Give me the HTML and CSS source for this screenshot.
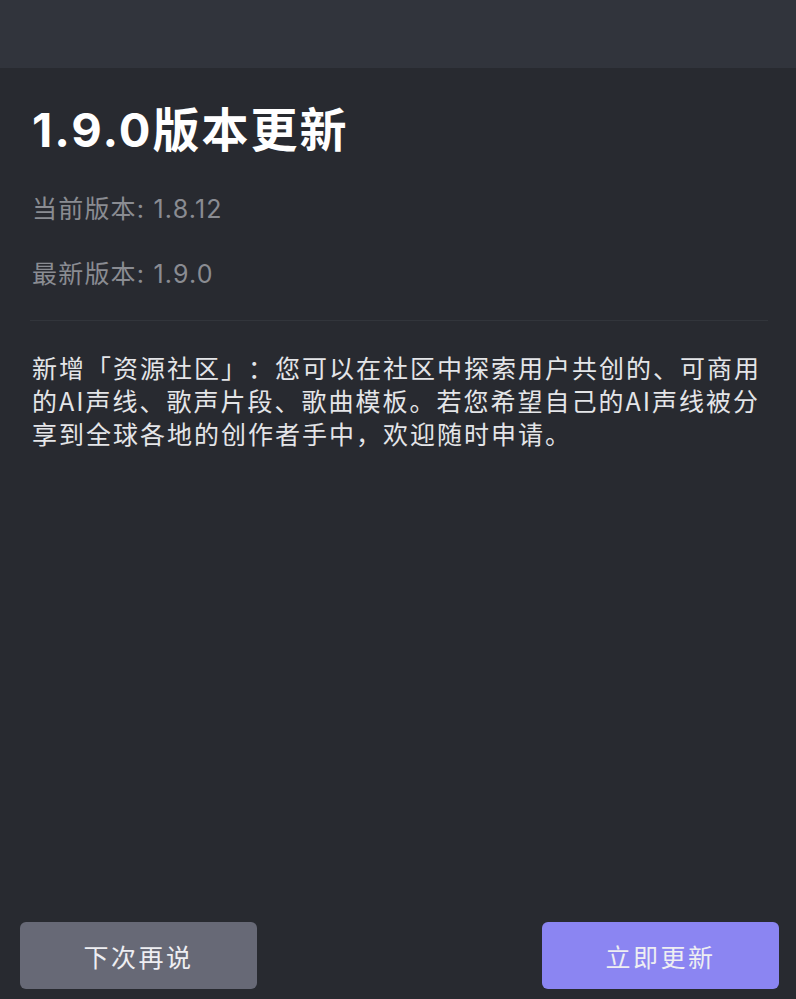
FILE: index.html
```html
<!DOCTYPE html>
<html lang="zh-CN">
<head>
<meta charset="utf-8">
<title>1.9.0版本更新</title>
<link rel="stylesheet" href="styles.css">
</head>
<body>
<div class="dialog">
  <div class="topbar"></div>
  <div class="content">
    <h1 class="title">1.9.0版本更新</h1>
    <p class="meta">当前版本: 1.8.12</p>
    <p class="meta meta-second">最新版本: 1.9.0</p>
    <div class="divider"></div>
    <p class="notes"><span class="line">新增「资源社区」：您可以在社区中探索用户共创的、可商用</span><span class="line">的AI声线、歌声片段、歌曲模板。若您希望自己的AI声线被分</span><span class="line">享到全球各地的创作者手中，欢迎随时申请。</span></p>
  </div>
  <div class="footer">
    <button class="btn btn-later">下次再说</button>
    <button class="btn btn-update">立即更新</button>
  </div>
</div>
</body>
</html>
```

FILE: styles.css
```css
html, body {
  margin: 0;
  padding: 0;
  background: #282a30;
}

body {
  font-family: Inter, "Noto Sans CJK SC", sans-serif;
  width: 796px;
  height: 999px;
  overflow: hidden;
}

.dialog {
  display: flex;
  flex-direction: column;
  height: 999px;
  background: #282a30;
}

.topbar {
  height: 68px;
  background: #31343c;
  flex: none;
}

.content {
  padding: 0 28px 0 32px;
  flex: 1;
}

.title {
  margin: 33px 0 0;
  font-size: 47px;
  line-height: 57px;
  font-weight: 700;
  color: #ffffff;
  letter-spacing: 2px;
}

.meta {
  margin: 36px 0 0;
  font-size: 25px;
  line-height: 30px;
  color: #8a8c92;
  letter-spacing: 1.2px;
}

.meta-second {
  margin-top: 35px;
}

.divider {
  margin: 31px 0 0 -2px;
  height: 1px;
  background: #32353b;
}

.notes {
  margin: 30px 0 0;
  font-family: "Noto Sans CJK SC", sans-serif;
  font-size: 25px;
  line-height: 33px;
  color: #e4e5e8;
  letter-spacing: 2px;
  text-spacing-trim: space-all;
}

.line {
  display: block;
  white-space: nowrap;
}

.footer {
  display: flex;
  justify-content: space-between;
  padding: 0 17px 10px 20px;
  flex: none;
}

.btn {
  width: 237px;
  height: 67px;
  border: none;
  border-radius: 6px;
  font-family: "Noto Sans CJK SC", sans-serif;
  font-size: 25px;
  letter-spacing: 2.5px;
  color: #eeeef2;
  padding: 0;
}

.btn-later {
  background: #676976;
}

.btn-update {
  background: #8b85f2;
}
```
